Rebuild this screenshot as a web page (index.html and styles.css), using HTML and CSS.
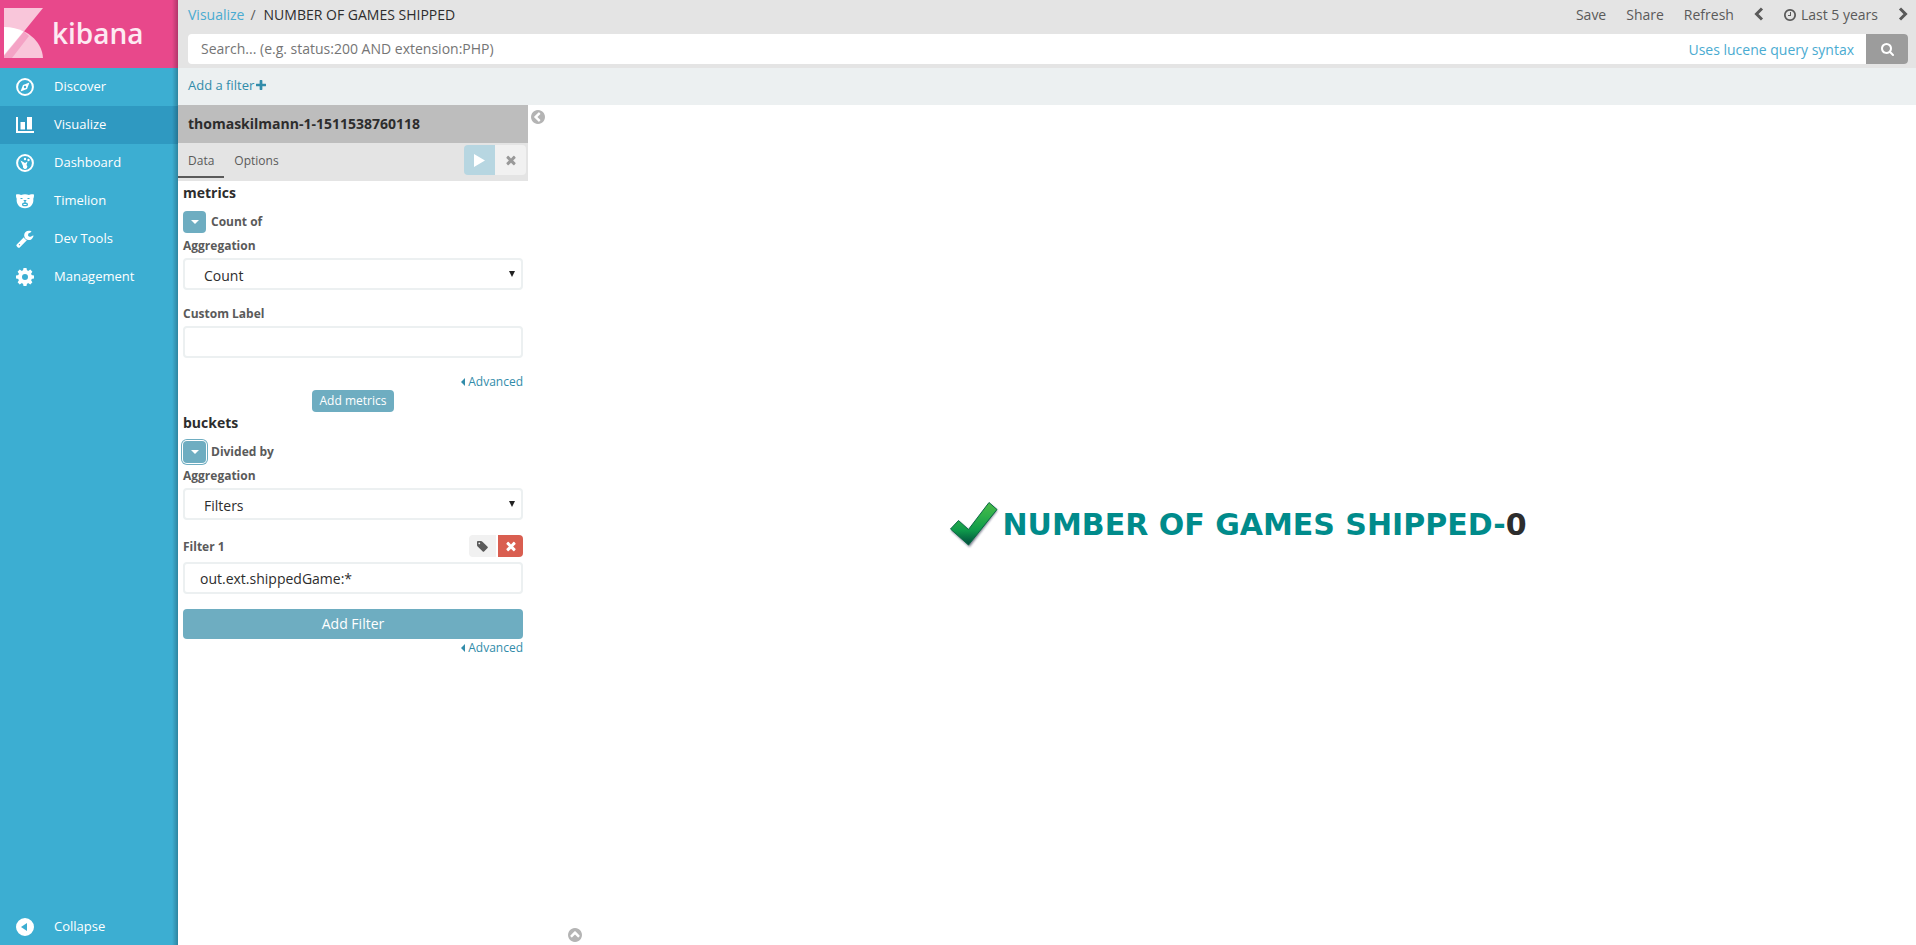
FILE: index.html
```html
<!DOCTYPE html>
<html lang="en">
<head>
<meta charset="utf-8">
<title>Kibana</title>
<link rel="stylesheet" href="styles.css">
</head>
<body>
<svg class="defs" aria-hidden="true">
  <symbol id="times" viewBox="0 0 1792 1792"><path d="M1490 1322q0 40-28 68l-136 136q-28 28-68 28t-68-28l-294-294-294 294q-28 28-68 28t-68-28l-136-136q-28-28-28-68t28-68l294-294-294-294q-28-28-28-68t28-68l136-136q28-28 68-28t68 28l294 294 294-294q28-28 68-28t68 28l136 136q28 28 28 68t-28 68l-294 294 294 294q28 28 28 68z"/></symbol>
  <symbol id="chevron" viewBox="0 0 10 14"><path d="M8 1.500 2.500 7 8 12.500" fill="none" stroke="currentColor" stroke-width="3"/></symbol>
  <symbol id="chevron-circle" viewBox="128 128 1536 1536"><path d="M1037 1395l102-102q19-19 19-45t-19-45l-307-307 307-307q19-19 19-45t-19-45l-102-102q-19-19-45-19t-45 19l-454 454q-19 19-19 45t19 45l454 454q19 19 45 19t45-19zm627-499q0 209-103 385.500t-279.500 279.500-385.500 103-385.500-103-279.500-279.500-103-385.500 103-385.500 279.500-279.500 385.500-103 385.500 103 279.500 279.500 103 385.500z"/></symbol>
  <symbol id="caret-down" viewBox="0 0 8 4"><path d="M0 0h8L4 4z"/></symbol>
  <symbol id="caret-left" viewBox="0 0 4 8"><path d="M4 0v8L0 4z"/></symbol>
</svg>
<div class="app">
  <aside class="sidebar">
    <a class="brand" href="#">
      <svg class="brand-mark" viewBox="0 0 39 50" aria-hidden="true">
        <path class="mark-light" d="M0 0h39L0 48z"/>
        <path class="mark-light" d="M0 19c22 0 38 14 39 31H0z"/>
        <path class="mark-mid" d="M20 23.500 25 28 8 50H0v-2z"/>
        <path class="mark-white" d="M0 19c8 0 14 1.500 19.500 4.500L0 47z"/>
      </svg>
      <span class="brand-name">kibana</span>
    </a>
    <nav class="nav">
      <a class="nav-item" href="#">
        <svg class="nav-icon" viewBox="0 0 18 18" aria-hidden="true"><circle cx="9" cy="9" r="7.900" fill="none" stroke="currentColor" stroke-width="2"/><path fill-rule="evenodd" d="M13.500 4.500 11 11l-6.500 2.500L7 7zM9 7.800a1.200 1.200 0 1 0 0 2.400 1.200 1.200 0 0 0 0-2.400z"/></svg>
        Discover</a>
      <a class="nav-item active" href="#">
        <svg class="nav-icon" viewBox="0 0 18 18" aria-hidden="true"><path d="M0 1h2v14h16v2H0zM4.500 6h4.500v7.500H4.500zM11 1h5v12.500h-5z"/></svg>
        Visualize</a>
      <a class="nav-item" href="#">
        <svg class="nav-icon" viewBox="0 0 18 18" aria-hidden="true"><circle cx="9" cy="9" r="7.900" fill="none" stroke="currentColor" stroke-width="2"/><path d="M4.500 6.500 9 9l2.500-1.500-1 3.500a2.200 2.200 0 1 1-3.500 1z"/><circle cx="9" cy="5" r="1.200"/><circle cx="12.500" cy="6" r="1.200"/></svg>
        Dashboard</a>
      <a class="nav-item" href="#">
        <svg class="nav-icon" viewBox="0 0 18 18" aria-hidden="true"><path fill-rule="evenodd" d="M0 2.500C2 2 4 2 5 3q4-1.500 8 0c1-1 3-1 5-.5 0 2-.1 3-.7 4.200C18 12 14.500 16.200 9 16.200S0 12 .7 6.700C.1 5.500 0 4.500 0 2.500zM4.500 6v1h2V6zm7 0v1h2V6zM7.300 8h3.400L9.600 9.500v1c1.600 0 2.400.8 2.400 2.200 0 1-1.300 1.600-3 1.600s-3-.6-3-1.600c0-1.400.8-2.200 2.400-2.200v-1zM7.500 12v1h3v-1z"/></svg>
        Timelion</a>
      <a class="nav-item" href="#">
        <svg class="nav-icon" viewBox="64 64 1700 1728" aria-hidden="true"><path d="M448 1472q0-26-19-45t-45-19-45 19-19 45 19 45 45 19 45-19 19-45zm644-420l-682 682q-37 37-90 37-52 0-91-37l-106-108q-38-36-38-90 0-53 38-91l681-681q39 98 114.500 173.500t173.500 114.500zm634-435q0 39-23 106-47 134-164.500 217.500t-258.500 83.500q-185 0-316.500-131.500t-131.500-316.500 131.500-316.500 316.500-131.500q58 0 121.500 16.500t107.500 46.500q16 11 16 28t-16 28l-293 169v224l193 107q5-3 79-48.500t135.500-81 70.500-35.500q15 0 23.500 10t8.500 25z"/></svg>
        Dev Tools</a>
      <a class="nav-item" href="#">
        <svg class="nav-icon" viewBox="0 0 18 18" aria-hidden="true"><circle cx="9" cy="9" r="5" fill="none" stroke="currentColor" stroke-width="4"/><path d="M7.500 0h3l.6 3H6.900zM7.500 18h3l.6-3H6.900zM0 7.500v3l3 .6V6.900zM18 7.500v3l-3 .6V6.900zM1.600 3.700l2.100-2.100 2.500 1.700-2.900 2.900zM16.400 3.700l-2.100-2.100-2.500 1.700 2.900 2.900zM1.600 14.300l2.100 2.100 2.500-1.700-2.900-2.900zM16.400 14.300l-2.100 2.100-2.500-1.700 2.900-2.900z"/></svg>
        Management</a>
    </nav>
    <button class="nav-item collapse" type="button">
      <svg class="nav-icon" viewBox="0 0 18 18" aria-hidden="true"><path fill-rule="evenodd" d="M9 0a9 9 0 1 1 0 18A9 9 0 0 1 9 0zm2 5L5 9l6 4z"/></svg>
      Collapse</button>
  </aside>

  <main class="main">
    <header class="topbar">
      <div class="topline">
        <div class="crumbs"><a href="#">Visualize</a><span class="slash">/</span><span class="current">NUMBER OF GAMES SHIPPED</span></div>
        <div class="actions">
          <button type="button">Save</button>
          <button type="button">Share</button>
          <button type="button">Refresh</button>
          <button type="button" aria-label="Previous period"><svg class="chevron" aria-hidden="true"><use href="#chevron"/></svg></button>
          <button type="button"><svg class="clock" viewBox="128 128 1536 1536" aria-hidden="true"><path d="M1024 544v448q0 14-9 23t-23 9h-320q-14 0-23-9t-9-23v-64q0-14 9-23t23-9h224v-352q0-14 9-23t23-9h64q14 0 23 9t9 23zm416 352q0-148-73-273t-198-198-273-73-273 73-198 198-73 273 73 273 198 198 273 73 273-73 198-198 73-273zm224 0q0 209-103 385.500t-279.500 279.500-385.500 103-385.500-103-279.500-279.500-103-385.500 103-385.500 279.500-279.500 385.500-103 385.500 103 279.500 279.500 103 385.500z"/></svg>Last 5 years</button>
          <button type="button" aria-label="Next period"><svg class="chevron flip" aria-hidden="true"><use href="#chevron"/></svg></button>
        </div>
      </div>
      <form class="search">
        <input class="search-input" type="text" aria-label="Search" placeholder="Search... (e.g. status:200 AND extension:PHP)">
        <a class="syntax" href="#">Uses lucene query syntax</a>
        <button class="search-button" type="button" aria-label="Search"><svg viewBox="64 128 1664 1664" aria-hidden="true"><path d="M1216 832q0-185-131.500-316.500t-316.500-131.500-316.500 131.500-131.500 316.500 131.500 316.500 316.500 131.500 316.500-131.500 131.500-316.500zm512 832q0 52-38 90t-90 38q-54 0-90-38l-343-342q-179 124-399 124-143 0-273.500-55.500t-225-150-150-225-55.500-273.500 55.500-273.500 150-225 225-150 273.500-55.500 273.500 55.500 225 150 150 225 55.500 273.500q0 220-124 399l343 343q37 37 37 90z"/></svg></button>
      </form>
    </header>
    <div class="filterbar">
      <a href="#">Add a filter<svg viewBox="192 128 1408 1408" aria-hidden="true"><path d="M1600 736v192q0 40-28 68t-68 28h-416v416q0 40-28 68t-68 28h-192q-40 0-68-28t-28-68v-416h-416q-40 0-68-28t-28-68v-192q0-40 28-68t68-28h416v-416q0-40 28-68t68-28h192q40 0 68 28t28 68v416h416q40 0 68 28t28 68z"/></svg></a>
    </div>

    <div class="workspace">
      <section class="editor">
        <h1 class="index-name">thomaskilmann-1-1511538760118</h1>
        <div class="tabs">
          <button class="tab selected" type="button">Data</button>
          <button class="tab" type="button">Options</button>
          <div class="run">
            <button class="apply" type="button" aria-label="Apply changes"><svg viewBox="0 0 11 13" aria-hidden="true"><path d="M0 0l11 6.500L0 13z"/></svg></button>
            <button class="discard" type="button" aria-label="Discard changes"><svg aria-hidden="true"><use href="#times"/></svg></button>
          </div>
        </div>
        <div class="editor-body">
          <h2 class="group-title">metrics</h2>
          <div class="agg-head"><button class="toggle" type="button" aria-label="Toggle count"><svg aria-hidden="true"><use href="#caret-down"/></svg></button>Count of</div>
          <label class="field-label" for="metric-agg">Aggregation</label>
          <div class="select-box"><select class="field" id="metric-agg"><option>Count</option></select><svg aria-hidden="true" viewBox="0 0 6 6"><path d="M0 0h6L3 6z"/></svg></div>
          <label class="field-label" for="custom-label">Custom Label</label>
          <input class="field" id="custom-label" type="text">
          <a class="advanced" href="#"><svg aria-hidden="true"><use href="#caret-left"/></svg>Advanced</a>
          <button class="small-button" type="button">Add metrics</button>

          <h2 class="group-title">buckets</h2>
          <div class="agg-head"><button class="toggle focused" type="button" aria-label="Toggle filters"><svg aria-hidden="true"><use href="#caret-down"/></svg></button>Divided by</div>
          <label class="field-label" for="bucket-agg">Aggregation</label>
          <div class="select-box"><select class="field" id="bucket-agg"><option>Filters</option></select><svg aria-hidden="true" viewBox="0 0 6 6"><path d="M0 0h6L3 6z"/></svg></div>
          <div class="filter-head">
            <label for="filter-1">Filter 1</label>
            <button class="tag" type="button" aria-label="Label filter"><svg viewBox="128 128 1536 1536" aria-hidden="true"><path d="M576 448q0-53-37.500-90.500t-90.500-37.500-90.500 37.500-37.500 90.500 37.500 90.500 90.500 37.500 90.500-37.500 37.500-90.500zm1067 576q0 53-37 90l-491 492q-39 37-91 37-53 0-90-37l-715-716q-38-37-64.500-101t-26.500-117v-416q0-52 38-90t90-38h416q53 0 117 26.500t102 64.500l715 714q37 39 37 91z"/></svg></button>
            <button class="remove" type="button" aria-label="Remove filter"><svg aria-hidden="true"><use href="#times"/></svg></button>
          </div>
          <input class="field" id="filter-1" type="text" value="out.ext.shippedGame:*">
          <button class="wide-button" type="button">Add Filter</button>
          <a class="advanced last" href="#"><svg aria-hidden="true"><use href="#caret-left"/></svg>Advanced</a>
        </div>
      </section>
      <button class="fold-editor" type="button" aria-label="Collapse editor"><svg aria-hidden="true"><use href="#chevron-circle"/></svg></button>
      <section class="canvas">
        <div class="metric">
          <svg class="check" viewBox="0 0 50 48" aria-hidden="true">
            <defs>
              <linearGradient id="green" x1="0" y1="0" x2="0" y2="1"><stop offset="0" stop-color="#4ab948"/><stop offset=".3" stop-color="#2fb04a"/><stop offset=".65" stop-color="#0f9a4b"/><stop offset="1" stop-color="#004a3c"/></linearGradient>
              <filter id="soft"><feGaussianBlur stdDeviation="0.9"/></filter>
            </defs>
            <path d="M2 29.500 10 21l10 8L41 3l7.500 6.500L20.500 46z" fill="#1b2540" opacity=".6" filter="url(#soft)"/>
            <path d="M1.500 28 9.500 19.500l10 9L40 1.500l8 7L19.500 44z" fill="url(#green)" stroke="#0b6b45" stroke-width="1"/>
          </svg>
          <span class="metric-title">NUMBER OF GAMES SHIPPED-</span><span class="metric-value">0</span>
        </div>
        <button class="spy" type="button" aria-label="Show details"><svg aria-hidden="true"><use href="#chevron-circle"/></svg></button>
      </section>
    </div>
  </main>
</div>
</body>
</html>
```

FILE: styles.css
```css
* { box-sizing: border-box; }

body {
  margin: 0;
  color: #2d2d2d;
  background: #fff;
  font: 14px/20px "Open Sans", "Noto Sans", sans-serif;
}

a { color: inherit; text-decoration: none; }

button {
  display: flex;
  align-items: center;
  justify-content: center;
  margin: 0;
  padding: 0;
  border: 0;
  background: none;
  color: inherit;
  font: inherit;
}

svg { display: block; flex: none; fill: currentColor; }
.defs { display: none; }

.app { display: flex; min-height: 100vh; }

/* Sidebar */
.sidebar {
  display: flex;
  flex: none;
  flex-direction: column;
  width: 178px;
  color: #fff;
  background: linear-gradient(to left, rgba(0, 0, 0, .24), rgba(0, 0, 0, 0) 6px), #3caed2;
}
.brand {
  display: flex;
  align-items: center;
  gap: 9px;
  height: 68px;
  padding: 0 0 2px 4px;
  background: linear-gradient(to left, rgba(0, 0, 0, .24), rgba(0, 0, 0, 0) 6px), #e8488b;
}
.brand-mark { width: 39px; height: 50px; }
.mark-light { fill: #f9c6da; }
.mark-mid { fill: #f4a3c5; }
.mark-white { fill: #fff; }
.brand-name { color: #fdeaf2; font-size: 28px; font-weight: 600; line-height: 36px; }
.nav { flex: 1; }
.nav-item {
  display: flex;
  align-items: center;
  justify-content: flex-start;
  gap: 20px;
  width: 100%;
  height: 38px;
  padding: 0 0 2px 16px;
  font-size: 13px;
}
.nav-item.active { background: linear-gradient(to left, rgba(0, 0, 0, .24), rgba(0, 0, 0, 0) 6px), #2f99c1; }
.nav-icon { width: 18px; height: 18px; margin-top: 2px; }
.collapse { height: 36px; }

/* Top bar */
.main { display: flex; flex: 1; flex-direction: column; min-width: 0; }
.topbar { padding: 0 8px 4px 10px; background: #e4e4e4; }
.topline { display: flex; justify-content: space-between; height: 34px; padding-top: 5px; }
.crumbs { display: flex; }
.crumbs a, .syntax { color: #4aabd1; }
.slash { margin: 0 8px 0 6px; color: #5a5a5a; }
.actions { display: flex; align-items: flex-start; gap: 20px; color: #5a5a5a; }
.chevron { width: 10px; height: 14px; margin-top: 2px; }
.flip { transform: scaleX(-1); }
.actions .clock { width: 12px; height: 12px; margin-right: 5px; }
.search { display: flex; height: 30px; border-radius: 4px; background: #fff; }
.search-input {
  flex: 1;
  min-width: 0;
  padding: 0 13px;
  border: 0;
  background: none;
  color: #2d2d2d;
  font: inherit;
}
.search-input::placeholder { color: #757575; opacity: 1; }
.syntax { padding: 6px 12px 0; }
.search-button {
  width: 42px;
  border-radius: 0 4px 4px 0;
  color: #fff;
  background: #9c9c9c;
}
.search-button svg { width: 13px; height: 13px; }
.filterbar { height: 37px; padding: 7px 10px; color: #328caa; background: #ecf0f1; font-size: 13px; }
.filterbar a { display: inline-flex; align-items: center; gap: 2px; }
.filterbar svg { width: 10px; height: 10px; }

/* Editor */
.workspace { display: flex; flex: 1; }
.editor { flex: none; width: 350px; }
.index-name {
  margin: 0;
  padding: 9px 10px;
  background: #bdbdbd;
  font-size: 14px;
  font-weight: 700;
  line-height: 20px;
}
.tabs { display: flex; align-items: flex-start; height: 38px; background: #e4e4e4; color: #5a5a5a; }
.tab { height: 35px; padding: 2px 10px 0; border-bottom: 2px solid transparent; font-size: 12px; }
.tab.selected { border-color: #5a5a5a; }
.run { display: flex; margin: 2px 2px 0 auto; }
.run button { width: 31px; height: 30px; }
.run .apply { border-radius: 4px 0 0 4px; background: #b7d6e1; color: #fff; }
.run .discard { border-radius: 0 4px 4px 0; background: #f1f1f1; color: #999; }
.apply svg { width: 11px; height: 13px; }
.discard svg, .remove svg { width: 14px; height: 14px; }
.editor-body { padding: 2px 5px; color: #5a5a5a; }
.group-title { margin: 0; color: #2d2d2d; font-size: 14px; font-weight: 700; line-height: 20px; }
.agg-head {
  display: flex;
  align-items: center;
  gap: 5px;
  margin: 8px 0 3px;
  font-size: 12px;
  font-weight: 700;
  line-height: 22px;
}
.toggle { width: 23px; height: 22px; border-radius: 4px; background: #6eadc1; color: #fff; }
.toggle svg { width: 8px; height: 4px; }
.focused { box-shadow: 0 0 0 1px #fff, 0 0 0 2px #6eadc1; }
.field-label { display: block; margin-bottom: 2px; font-size: 12px; font-weight: 700; line-height: 20px; }
.field {
  display: block;
  width: 100%;
  height: 32px;
  margin: 0;
  padding: 0 15px;
  border: 2px solid #ecf0f1;
  border-radius: 4px;
  appearance: none;
  background: #fff;
  color: #2d2d2d;
  font: inherit;
}
.select-box { position: relative; margin-bottom: 14px; }
.select-box .field { padding: 3px 19px 0; }
.select-box svg { position: absolute; top: 13px; right: 8px; width: 6px; height: 6px; color: #222; pointer-events: none; }
.advanced {
  display: flex;
  align-items: center;
  justify-content: flex-end;
  gap: 3px;
  margin-top: 16px;
  color: #328caa;
  font-size: 12px;
  line-height: 16px;
}
.advanced svg { width: 4px; height: 8px; }
.advanced.last { margin-top: 1px; }
.small-button {
  height: 22px;
  margin: 0 auto;
  padding: 0 8px;
  border-radius: 4px;
  background: #6eadc1;
  color: #fff;
  font-size: 12px;
}
.small-button + .group-title { margin-top: 1px; }
.filter-head {
  display: flex;
  gap: 2px;
  margin-bottom: 3px;
  padding-top: 1px;
  font-size: 12px;
  font-weight: 700;
  line-height: 24px;
}
.filter-head label { flex: 1; }
.filter-head button { height: 22px; }
.tag { width: 27px; border-radius: 4px 0 0 4px; background: #f1f1f1; }
.tag svg { width: 11px; height: 11px; }
.remove { width: 25px; border-radius: 0 4px 4px 0; background: #d95e50; color: #fff; }
.wide-button {
  width: 100%;
  height: 30px;
  margin-top: 15px;
  border-radius: 4px;
  background: #6eadc1;
  color: #fff;
}

/* Visualization */
.fold-editor { align-self: flex-start; margin: 5px 3px; color: #b4b4b4; }
.fold-editor svg, .spy svg { width: 14px; height: 14px; }
.canvas { position: relative; display: flex; flex: 1; min-width: 0; padding-left: 20px; }
.metric {
  display: flex;
  flex: 1;
  align-items: center;
  justify-content: center;
  padding-right: 8px;
  font: 700 30px/40px "DejaVu Sans", Verdana, sans-serif;
}
.check { width: 50px; height: 48px; margin-right: 3px; }
.metric-title { color: #008b8b; }
.spy { position: absolute; bottom: 3px; left: 20px; color: #b4b4b4; transform: rotate(90deg); }
```
